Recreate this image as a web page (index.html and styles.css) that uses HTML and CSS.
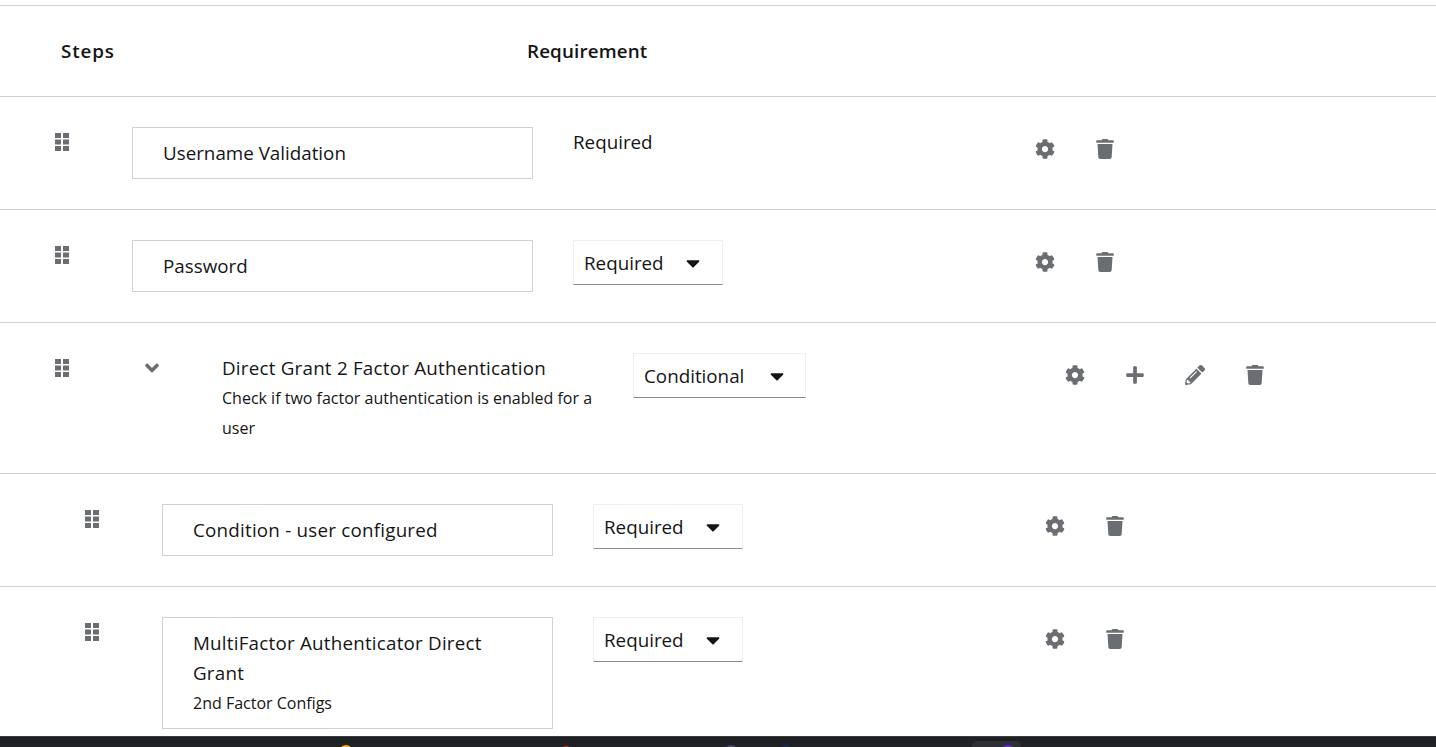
FILE: index.html
```html
<!DOCTYPE html>
<html lang="en">
<head>
    <meta charset="UTF-8">
    <title>Authentication flow steps</title>
    <link rel="stylesheet" href="styles.css">
</head>
<body>
    <svg class="icon-defs" aria-hidden="true">
        <symbol id="i-grip" viewBox="0 0 14 18">
            <path d="M0 0h6v5H0zM8 0h6v5H8zM0 6.500h6v5H0zM8 6.500h6v5H8zM0 13h6v5H0zM8 13h6v5H8z"/>
        </symbol>
        <symbol id="i-cog" viewBox="0 0 512 512">
            <path d="M487.400 315.700l-42.600-24.600c4.300-23.200 4.300-47 0-70.200l42.600-24.600c4.900-2.800 7.100-8.600 5.500-14-11.100-35.600-30-67.800-54.700-94.600-3.800-4.100-10-5.100-14.800-2.300L380.800 110c-17.900-15.400-38.500-27.300-60.800-35.100V25.800c0-5.600-3.900-10.500-9.400-11.700-36.700-8.200-74.300-7.800-109.200 0-5.500 1.200-9.400 6.100-9.400 11.700V75c-22.200 7.900-42.800 19.800-60.800 35.100L88.700 85.500c-4.900-2.800-11-1.900-14.800 2.300-24.700 26.700-43.600 58.900-54.700 94.600-1.700 5.400.6 11.200 5.500 14L67.300 221c-4.300 23.200-4.300 47 0 70.200l-42.600 24.600c-4.900 2.800-7.100 8.600-5.500 14 11.100 35.600 30 67.800 54.700 94.600 3.800 4.100 10 5.100 14.800 2.300l42.600-24.600c17.900 15.400 38.500 27.300 60.800 35.100v49.200c0 5.600 3.900 10.500 9.400 11.700 36.700 8.200 74.300 7.800 109.200 0 5.500-1.200 9.400-6.100 9.400-11.700v-49.200c22.200-7.900 42.800-19.800 60.800-35.100l42.600 24.600c4.900 2.800 11 1.900 14.800-2.300 24.700-26.700 43.600-58.900 54.700-94.600 1.500-5.500-.7-11.300-5.600-14.100zM256 336c-44.100 0-80-35.900-80-80s35.900-80 80-80 80 35.900 80 80-35.900 80-80 80z"/>
        </symbol>
        <symbol id="i-trash" viewBox="0 0 448 512">
            <path d="M432 32H312l-9.400-18.700A24 24 0 0 0 281.100 0H166.800a23.720 23.720 0 0 0-21.400 13.300L136 32H16A16 16 0 0 0 0 48v32a16 16 0 0 0 16 16h416a16 16 0 0 0 16-16V48a16 16 0 0 0-16-16zM53.200 467a48 48 0 0 0 47.900 45h245.800a48 48 0 0 0 47.900-45L416 128H32z"/>
        </symbol>
        <symbol id="i-plus" viewBox="0 0 448 512">
            <path d="M416 208H272V64c0-17.670-14.330-32-32-32h-32c-17.670 0-32 14.330-32 32v144H32c-17.670 0-32 14.330-32 32v32c0 17.670 14.330 32 32 32h144v144c0 17.670 14.330 32 32 32h32c17.670 0 32-14.330 32-32V304h144c17.670 0 32-14.330 32-32v-32c0-17.670-14.330-32-32-32z"/>
        </symbol>
        <symbol id="i-pencil" viewBox="0 0 512 512">
            <path d="M497.900 142.100l-46.100 46.100c-4.700 4.700-12.300 4.700-17 0l-111-111c-4.700-4.700-4.700-12.300 0-17l46.100-46.100c18.700-18.700 49.100-18.700 67.900 0l60.100 60.100c18.800 18.700 18.800 49.100 0 67.900zM284.200 99.800L21.600 362.400.4 483.900c-2.900 16.400 11.400 30.600 27.800 27.800l121.500-21.300 262.600-262.600c4.700-4.700 4.700-12.300 0-17l-111-111c-4.800-4.700-12.400-4.700-17.100 0zM124.100 339.900c-5.500-5.500-5.500-14.300 0-19.800l154-154c5.500-5.500 14.300-5.500 19.800 0s5.500 14.300 0 19.800l-154 154c-5.500 5.500-14.300 5.500-19.800 0zM88 424h48v36.300l-64.500 11.300-31.100-31.100L51.700 376H88v48z"/>
        </symbol>
        <symbol id="i-angle" viewBox="0 0 320 512">
            <path d="M143 352.300L7 216.300c-9.400-9.400-9.400-24.600 0-33.900l22.600-22.600c9.400-9.400 24.600-9.400 33.900 0l96.400 96.400 96.400-96.400c9.400-9.400 24.600-9.400 33.900 0l22.600 22.600c9.400 9.400 9.400 24.600 0 33.900l-136 136c-9.200 9.400-24.400 9.400-33.800 0z"/>
        </symbol>
        <symbol id="i-caret" viewBox="0 0 320 512">
            <path d="M31.300 192h257.300c17.800 0 26.700 21.500 14.100 34.100L174.100 354.800c-7.800 7.800-20.500 7.800-28.300 0L17.200 226.100C4.600 213.500 13.500 192 31.300 192z"/>
        </symbol>
    </svg>

    <div class="page">
        <div class="table-head">
            <div class="head-steps">Steps</div>
            <div class="head-req">Requirement</div>
        </div>

        <div class="row">
            <div class="cell-drag"><svg class="grip"><use href="#i-grip"/></svg></div>
            <div class="step-box">Username Validation</div>
            <div class="req-text">Required</div>
            <div class="actions">
                <svg class="action"><use href="#i-cog"/></svg>
                <svg class="action"><use href="#i-trash"/></svg>
            </div>
        </div>

        <div class="row">
            <div class="cell-drag"><svg class="grip"><use href="#i-grip"/></svg></div>
            <div class="step-box">Password</div>
            <div class="cell-req">
                <div class="select select-required">Required <svg class="caret"><use href="#i-caret"/></svg></div>
            </div>
            <div class="actions">
                <svg class="action"><use href="#i-cog"/></svg>
                <svg class="action"><use href="#i-trash"/></svg>
            </div>
        </div>

        <div class="row row-group">
            <div class="cell-drag">
                <svg class="grip"><use href="#i-grip"/></svg>
                <svg class="toggle"><use href="#i-angle"/></svg>
            </div>
            <div class="group-info">
                <div class="long-title">Direct Grant 2 Factor Authentication</div>
                <div class="desc">Check if two factor authentication is enabled for a user</div>
            </div>
            <div class="cell-req">
                <div class="select select-conditional">Conditional <svg class="caret"><use href="#i-caret"/></svg></div>
            </div>
            <div class="actions">
                <svg class="action"><use href="#i-cog"/></svg>
                <svg class="action"><use href="#i-plus"/></svg>
                <svg class="action"><use href="#i-pencil"/></svg>
                <svg class="action"><use href="#i-trash"/></svg>
            </div>
        </div>

        <div class="row row-nested">
            <div class="cell-drag"><svg class="grip"><use href="#i-grip"/></svg></div>
            <div class="step-box long-title">Condition - user configured</div>
            <div class="cell-req">
                <div class="select select-required">Required <svg class="caret"><use href="#i-caret"/></svg></div>
            </div>
            <div class="actions">
                <svg class="action"><use href="#i-cog"/></svg>
                <svg class="action"><use href="#i-trash"/></svg>
            </div>
        </div>

        <div class="row row-nested">
            <div class="cell-drag"><svg class="grip"><use href="#i-grip"/></svg></div>
            <div class="step-box">
                <div class="long-title">MultiFactor Authenticator Direct Grant</div>
                <div class="desc">2nd Factor Configs</div>
            </div>
            <div class="cell-req">
                <div class="select select-required">Required <svg class="caret"><use href="#i-caret"/></svg></div>
            </div>
            <div class="actions">
                <svg class="action"><use href="#i-cog"/></svg>
                <svg class="action"><use href="#i-trash"/></svg>
            </div>
        </div>
    </div>

    <div class="taskbar">
        <span class="dot dot-yellow"></span>
        <span class="dot dot-red"></span>
        <span class="dot dot-slate"></span>
        <span class="dot dot-navy"></span>
        <span class="active-tile"><span class="dot dot-violet"></span></span>
    </div>
</body>
</html>
```

FILE: styles.css
```css
* {
    margin: 0;
    padding: 0;
    box-sizing: border-box;
}

html, body {
    height: 747px;
    overflow: hidden;
}

body {
    font-family: "Open Sans", sans-serif;
    font-size: 18.8px;
    line-height: 30px;
    color: #151515;
    background: #fff;
    display: flex;
    flex-direction: column;
}

.icon-defs {
    display: none;
}

.page {
    flex: 1;
    min-height: 0;
    overflow: hidden;
    padding-top: 5px;
}

.table-head {
    height: 92px;
    border-top: 1px solid #d2d2d2;
    border-bottom: 1px solid #d2d2d2;
    display: flex;
    align-items: center;
    font-weight: 600;
}

.head-steps {
    width: 527px;
    padding-left: 61px;
    letter-spacing: 0.9px;
}

.head-req {
    letter-spacing: 0.15px;
}

.row {
    display: grid;
    grid-template-columns: 132px 441px 462px 1fr;
    align-items: start;
    padding: 30px 0;
    border-bottom: 1px solid #d2d2d2;
}

.row-group {
    grid-template-columns: 222px 411px 432px 1fr;
}

.row-nested {
    grid-template-columns: 162px 431px 452px 1fr;
}

.cell-drag {
    display: flex;
    padding-left: 55px;
    padding-top: 6px;
}

.row-nested .cell-drag {
    padding-left: 85px;
}

.grip {
    width: 14px;
    height: 18px;
    fill: #6a6e73;
}

.toggle {
    width: 14px;
    height: 22px;
    margin: -2px 0 0 76px;
    fill: #6a6e73;
}

.step-box {
    border: 1px solid #d2d2d2;
    padding: 10px 30px;
    width: 401px;
}

.row-nested .step-box {
    width: 391px;
}

.group-info {
    width: 380px;
}

.long-title {
    letter-spacing: 0.22px;
}

.desc {
    font-size: 16px;
    letter-spacing: 0;
}

.select {
    height: 45px;
    display: flex;
    align-items: center;
    padding-left: 10px;
    border: 1px solid #f0f0f0;
    border-bottom-color: #8a8d90;
}

.select-required {
    width: 150px;
}

.select-conditional {
    width: 173px;
}

.caret {
    width: 14px;
    height: 22px;
    margin-left: 22px;
    fill: #151515;
}

.select-conditional .caret {
    margin-left: 26px;
}

.actions {
    display: flex;
    gap: 40px;
    padding-top: 12px;
}

.action {
    width: 20px;
    height: 20px;
    fill: #6a6e73;
}

.taskbar {
    height: 11px;
    background: #202124;
    border-top: 1px solid #3a3b3e;
    overflow: hidden;
    display: flex;
    align-items: flex-start;
}

.dot {
    display: block;
    width: 14px;
    height: 14px;
    border-radius: 50%;
    margin-top: 8px;
}

.dot-yellow {
    background: #f4b400;
    margin-left: 339px;
}

.dot-red {
    background: #c1352f;
    margin-top: 9px;
    margin-left: 206px;
}

.dot-slate {
    background: #4a4560;
    margin-left: 151px;
}

.dot-navy {
    background: #1c2a4a;
    margin-left: 41px;
}

.active-tile {
    width: 49px;
    height: 12px;
    margin: 4px 0 0 179px;
    padding-left: 29px;
    background: #2e2f33;
    border-radius: 5px 5px 0 0;
}

.dot-violet {
    background: #5b2bd0;
    margin-top: 4px;
}
```
